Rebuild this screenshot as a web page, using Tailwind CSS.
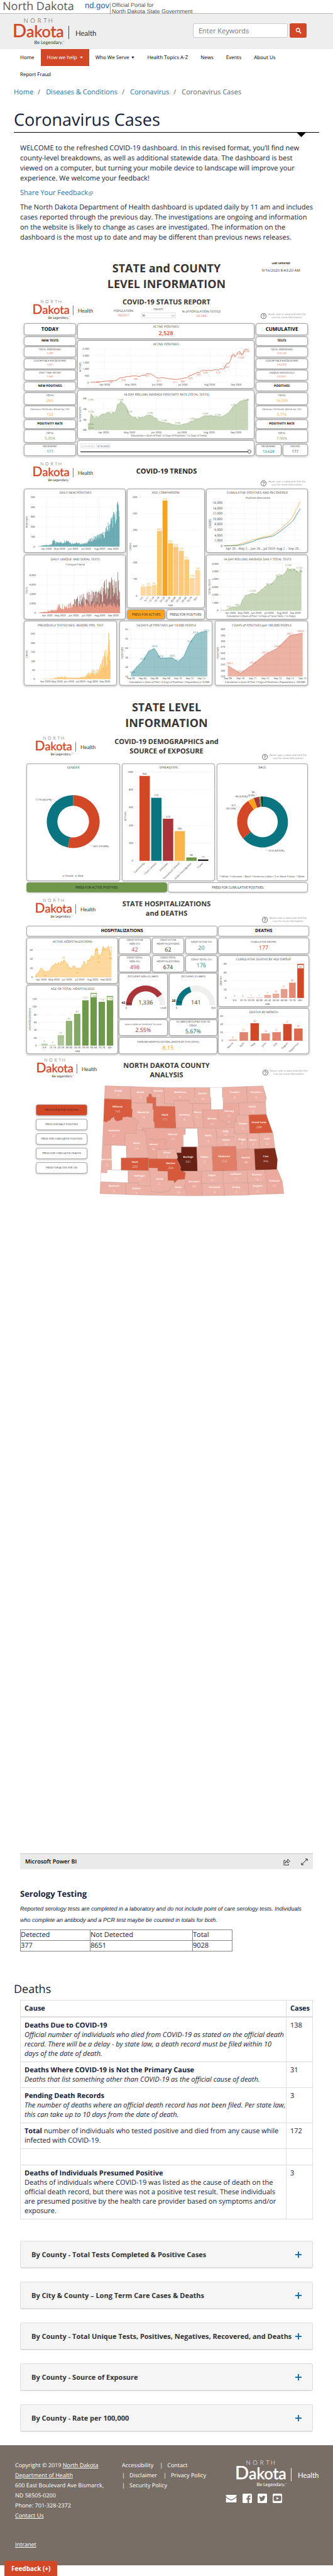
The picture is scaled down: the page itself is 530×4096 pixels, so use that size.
<!DOCTYPE html>
<html lang="en">
<head>
<meta charset="utf-8">
<meta name="viewport" content="width=device-width, initial-scale=1">
<title>Coronavirus Cases | Department of Health</title>
<script src="https://cdn.jsdelivr.net/npm/@tailwindcss/browser@4"></script>
</head>
<body class="bg-white font-['Open_Sans',sans-serif] text-[11px] leading-4 text-[#16213a] [text-rendering:geometricPrecision]">

<svg class="hidden" aria-hidden="true">
  <symbol id="logo" viewBox="0 0 194 65">
    <text x="23 39 56 70 81" y="11" font-family="Lato" font-weight="300" font-size="14" fill="currentColor">NORTH</text>
    <text x="-3" y="44" font-family="Lato" font-size="37" fill="var(--mark)" stroke="var(--mark)" stroke-width="0.8"><tspan font-size="43">D</tspan>akota</text>
    <path d="M129.500 18v31" stroke="currentColor" stroke-width="1.400"/>
    <text x="145" y="41" font-family="Lato" font-size="17" fill="currentColor">Health</text>
    <text x="48" y="61" font-family="Lato" font-size="11" fill="currentColor">Be Legendary.<tspan font-size="5" dy="-4">™</tspan></text>
  </symbol>
  <symbol id="help" viewBox="0 0 20 20">
    <circle cx="10" cy="10" r="9" fill="none" stroke="#222" stroke-width="1.500"/>
    <path d="M7 8a3 3 0 1 1 4.500 2.600c-1 .7-1.500 1-1.500 2.200" fill="none" stroke="#222" stroke-width="1.600"/>
    <circle cx="10" cy="15" r="1" fill="#222"/>
  </symbol>
</svg>

<div class="flex h-[21px] items-start pl-1">
  <a href="#" class="w-[131px] text-[18px] leading-5 text-[#58595b]">North Dakota</a>
  <a href="#" class="font-['Liberation_Sans',sans-serif] text-[13px] leading-[18px] text-[#2a63ad]">nd.gov</a>
  <span class="mt-1 ml-px border-l border-gray-400 pl-[2px] font-['Liberation_Sans',sans-serif] text-[9px] leading-[10px] text-[#555]"><span class="block -mt-px">Official Portal for</span><span class="block">North Dakota State Government</span></span>
</div>

<header class="flex h-[57px] items-center justify-between border-t border-[#bbb] bg-[#eee] pr-[42px] pl-[22px]">
  <svg class="mt-px h-11 w-[131px] text-[#333] [--mark:#d24726]" role="img" aria-label="North Dakota Health"><use href="#logo"/></svg>
  <form class="mt-[-3px] flex gap-[3px]">
    <input type="search" aria-label="Search" placeholder="Enter Keywords" class="h-[23px] w-[151px] rounded-[3px] border border-[#ccc] bg-white px-2 text-[11px] placeholder:text-[#777]">
    <button type="button" aria-label="Search" class="flex h-[23px] w-[27px] items-center justify-center rounded-[3px] bg-[#d24726]"><svg viewBox="0 0 12 12" class="size-[10px]"><circle cx="5" cy="4.500" r="3.300" fill="none" stroke="#fff" stroke-width="1.800"/><path d="M7.500 7l3.500 4" stroke="#fff" stroke-width="2"/></svg></button>
  </form>
</header>

<nav class="flex flex-wrap px-[22px] text-[8px] leading-[27px] text-black">
  <a href="#" class="px-[10px]">Home</a>
  <a href="#" class="flex items-center gap-1 bg-[#d24726] px-[10px] text-white">How we help <svg viewBox="0 0 6 4" class="h-[3px] w-[5px]"><path d="M0 0h6L3 4z" fill="currentColor"/></svg></a>
  <a href="#" class="flex items-center gap-1 px-[10px]">Who We Serve <svg viewBox="0 0 6 4" class="h-[3px] w-[5px]"><path d="M0 0h6L3 4z" fill="currentColor"/></svg></a>
  <a href="#" class="px-[10px]">Health Topics A-Z</a>
  <a href="#" class="px-[10px]">News</a>
  <a href="#" class="px-[10px]">Events</a>
  <a href="#" class="px-[10px]">About Us</a>
  <a href="#" class="px-[10px]">Report Fraud</a>
</nav>

<main>
  <div class="px-[22px]">
    <nav aria-label="Breadcrumb" class="mt-[7px] flex gap-[7px] text-[#666]">
      <a href="#" class="text-[#1b75aa]">Home</a><span>/</span>
      <a href="#" class="ml-[2px] text-[#1b75aa]">Diseases &amp; Conditions</a><span>/</span>
      <a href="#" class="ml-[2px] text-[#1b75aa]">Coronavirus</a><span>/</span>
      <span class="ml-[2px]">Coronavirus Cases</span>
    </nav>
    <h1 class="mt-[17px] h-[38px] text-[27px] leading-9">Coronavirus Cases</h1>
    <div class="border-t border-black"><svg viewBox="0 0 16 8" class="mr-[21px] ml-auto h-[7px] w-[15px]"><path d="M0 0h16L8 8z"/></svg></div>
  </div>

  <div class="pr-[30px] pl-8">
    <p class="mt-[10px]">WELCOME to the refreshed COVID-19 dashboard. In this revised format, you’ll find new county-level breakdowns, as well as additional statewide data. The dashboard is best viewed on a computer, but turning your mobile device to landscape will improve your experience. We welcome your feedback!</p>
    <p class="mt-[7px]"><a href="#" class="text-[#1b75aa]">Share Your Feedback<svg viewBox="0 0 10 10" class="ml-px inline size-[7px] text-gray-500"><path d="M4 3H1v6h5V6M4 1h5v5L7 4.500 4.500 7 3.200 5.600 5.700 3z" fill="none" stroke="currentColor"/></svg></a></p>
    <p class="mt-[7px]">The North Dakota Department of Health dashboard is updated daily by 11 am and includes cases reported through the previous day. The investigations are ongoing and information on the website is likely to change as cases are investigated. The information on the dashboard is the most up to date and may be different than previous news releases.</p>
  </div>

  <section aria-label="Dashboard" class="mt-[27px] px-[39px] text-[4px] leading-[6px] text-[#333]">
    <!-- Status report -->
    <div class="grid grid-cols-[1fr_auto_1fr]">
      <span></span>
      <h2 class="mt-[2px] text-center text-[18px] leading-[25px] font-bold text-[#3a3532]">STATE and COUNTY<br>LEVEL INFORMATION</h2>
      <div class="mt-1 justify-self-center pl-[44px] text-center"><b class="block text-black">LAST UPDATED</b><span class="mt-[3px] block text-[6px] leading-2">9/16/2020 8:43:20 AM</span></div>
    </div>
    <div class="mt-[9px] grid h-[41px] grid-cols-[1fr_auto_1fr]">
      <svg class="mt-[3px] ml-[14px] h-8 w-[95px] text-[#333] [--mark:#d24726]" role="img" aria-label="North Dakota Health"><use href="#logo"/></svg>
      <div class="text-center">
        <h3 class="text-[11px] leading-[14px] font-bold text-[#3a3532]">COVID-19 STATUS REPORT</h3>
        <div class="mt-[2px] grid grid-cols-[48px_auto_74px] justify-center gap-1 text-[5px] leading-[7px]">
          <div class="mt-[2px]">POPULATION<span class="block text-[#e0694e]">760,077</span></div>
          <label class="relative block w-[55px] text-[4px] leading-[5px]">COUNTY<select class="mt-[2px] block h-[9px] w-full appearance-none border border-gray-200 bg-white pl-px text-[4px]"><option>All</option></select><svg viewBox="0 0 8 5" class="pointer-events-none absolute right-[2px] bottom-[3px] h-[3px] w-[5px]"><path d="M0 0l4 4 4-4" fill="none" stroke="#666"/></svg></label>
          <div class="mt-[3px]">% of POPULATION TESTED<span class="block text-[#e0694e]">28.24%</span></div>
        </div>
      </div>
      <div class="mt-[24px] mr-[5px] flex items-start gap-[3px] justify-self-end text-center leading-[5px] text-[#888]"><svg class="h-[9px] w-[9px]"><use href="#help"/></svg><p>Hover over a value and click the<br>icon for more information</p></div>
    </div>
    <div id="status" class="grid grid-cols-[81fr_280fr_81fr] gap-1 pr-[2px] text-center">
      <div data-stack="today" class="flex flex-col justify-between"></div>
      <div class="flex flex-col justify-between gap-1">
        <div class="h-[23px] rounded-[3px] bg-white pt-[2px] text-[5px] leading-[7px] shadow-[0_0_0_1px_#aaa,0_1px_3px_2px_rgba(0,0,0,0.2)]">ACTIVE POSITIVES<b class="block text-[9px] leading-3 text-[#e0694e]">2,528</b></div>
        <svg id="active" viewBox="0 0 280 75" class="block w-full rounded-[3px] bg-white shadow-[0_0_0_1px_#aaa,0_1px_3px_2px_rgba(0,0,0,0.2)]"></svg>
        <svg id="rate" viewBox="0 0 280 76" class="block w-full rounded-[3px] bg-white shadow-[0_0_0_1px_#aaa,0_1px_3px_2px_rgba(0,0,0,0.2)]"></svg>
        <div class="h-[23px] rounded-[3px] bg-white px-1 pt-1 shadow-[0_0_0_1px_#aaa,0_1px_3px_2px_rgba(0,0,0,0.2)]">
          <div class="flex gap-[2px]"><input aria-label="From" value="3/15/2020" class="h-2 w-[23px] border border-gray-200 text-center text-gray-400"><input aria-label="To" value="9/15/2020" class="h-2 w-[23px] border border-gray-200 text-center text-gray-700"></div>
          <input type="range" aria-label="Date" value="100" class="mt-[2px] block h-[6px] w-full appearance-none [background:linear-gradient(#000,#000)_center/100%_1px_no-repeat] [&::-webkit-slider-thumb]:size-[6px] [&::-webkit-slider-thumb]:appearance-none [&::-webkit-slider-thumb]:rounded-full [&::-webkit-slider-thumb]:border [&::-webkit-slider-thumb]:border-gray-600 [&::-webkit-slider-thumb]:bg-white">
        </div>
      </div>
      <div data-stack="cumulative" class="flex flex-col justify-between"></div>
    </div>

    <!-- Trends -->
    <div class="grid h-[54px] grid-cols-[1fr_auto_1fr]">
      <svg class="mt-[11px] ml-[14px] h-8 w-[95px] text-[#333] [--mark:#d24726]" role="img" aria-label="North Dakota Health"><use href="#logo"/></svg>
      <h3 class="mt-[19px] text-[11px] leading-[14px] font-bold text-[#222]">COVID-19 TRENDS</h3>
      <div class="mt-[40px] mr-[5px] flex items-start gap-[3px] justify-self-end text-center leading-[5px] text-[#888]"><svg class="h-[9px] w-[9px]"><use href="#help"/></svg><p>Hover over a value and click the<br>icon for more information</p></div>
    </div>
    <div class="grid grid-cols-[160fr_121fr_160fr] gap-1 pr-[2px]">
      <div class="flex flex-col gap-[5px]">
        <svg id="daily" viewBox="0 0 160 100" class="block w-full rounded-[3px] bg-white shadow-[0_0_0_1px_#aaa,0_1px_3px_2px_rgba(0,0,0,0.2)]"></svg>
        <svg id="serial" viewBox="0 0 160 101" class="block w-full rounded-[3px] bg-white shadow-[0_0_0_1px_#aaa,0_1px_3px_2px_rgba(0,0,0,0.2)]"></svg>
      </div>
      <div class="flex flex-col justify-between">
        <svg id="age" viewBox="0 0 121 188" class="block w-full rounded-[3px] bg-white shadow-[0_0_0_1px_#aaa,0_1px_3px_2px_rgba(0,0,0,0.2)]"></svg>
        <div class="grid grid-cols-2 gap-1 text-[5px] leading-[14px]">
          <button type="button" class="rounded-[3px] bg-[#faa21b] shadow-[0_0_0_1px_#aaa,0_1px_3px_2px_rgba(0,0,0,0.2)]">PRESS FOR ACTIVES</button>
          <button type="button" class="rounded-[3px] bg-white shadow-[0_0_0_1px_#aaa,0_1px_3px_2px_rgba(0,0,0,0.2)]">PRESS FOR POSITIVES</button>
        </div>
      </div>
      <div class="flex flex-col gap-[5px]">
        <svg id="cumrec" viewBox="0 0 160 100" class="block w-full rounded-[3px] bg-white shadow-[0_0_0_1px_#aaa,0_1px_3px_2px_rgba(0,0,0,0.2)]"></svg>
        <svg id="rolling" viewBox="0 0 160 101" class="block w-full rounded-[3px] bg-white shadow-[0_0_0_1px_#aaa,0_1px_3px_2px_rgba(0,0,0,0.2)]"></svg>
      </div>
    </div>
    <div class="mt-1 grid grid-cols-3 gap-[6px] pr-[2px]">
      <svg id="prev" viewBox="0 0 146 101" class="block w-full rounded-[3px] bg-white shadow-[0_0_0_1px_#aaa,0_1px_3px_2px_rgba(0,0,0,0.2)]"></svg>
      <svg id="d14" viewBox="0 0 146 101" class="block w-full rounded-[3px] bg-white shadow-[0_0_0_1px_#aaa,0_1px_3px_2px_rgba(0,0,0,0.2)]"></svg>
      <svg id="d7" viewBox="0 0 146 101" class="block w-full rounded-[3px] bg-white shadow-[0_0_0_1px_#aaa,0_1px_3px_2px_rgba(0,0,0,0.2)]"></svg>
    </div>

    <!-- State level -->
    <h2 class="mt-6 text-center text-[18px] leading-[25px] font-bold text-[#3a3532]">STATE LEVEL<br>INFORMATION</h2>
    <div class="grid h-[52px] grid-cols-[1fr_auto_1fr]">
      <svg class="mt-[8px] ml-[18px] h-8 w-[95px] text-[#333] [--mark:#d24726]" role="img" aria-label="North Dakota Health"><use href="#logo"/></svg>
      <h3 class="mt-[9px] text-center text-[11px] leading-[15px] font-bold text-[#3a3532]">COVID-19 DEMOGRAPHICS and<br>SOURCE of EXPOSURE</h3>
      <div class="mt-[36px] mr-[3px] flex items-start gap-[3px] justify-self-end text-center leading-[5px] text-[#888]"><svg class="h-[9px] w-[9px]"><use href="#help"/></svg><p>Hover over a value and click the<br>icon for more information</p></div>
    </div>
    <div class="grid grid-cols-[147fr_147fr_143fr] gap-[5px] pr-[2px] pl-1">
      <svg id="gender" viewBox="0 0 147 185" class="block w-full rounded-[3px] bg-white shadow-[0_0_0_1px_#aaa,0_1px_3px_1px_rgba(0,0,0,0.2)]"></svg>
      <svg id="spread" viewBox="0 0 147 185" class="block w-full rounded-[3px] bg-white shadow-[0_0_0_1px_#aaa,0_1px_3px_1px_rgba(0,0,0,0.2)]"></svg>
      <svg id="race" viewBox="0 0 143 185" class="block h-full w-full rounded-[3px] bg-white shadow-[0_0_0_1px_#aaa,0_1px_3px_1px_rgba(0,0,0,0.2)]"></svg>
    </div>
    <div class="mt-1 grid grid-cols-2 gap-[3px] pr-[2px] pl-1 text-[5px] leading-[14px]">
      <button type="button" class="rounded-[3px] bg-[#6f984a] text-[#222] shadow-[0_0_0_1px_#7a9a60,0_1px_3px_1px_rgba(0,0,0,0.2)]">PRESS FOR ACTIVE POSITIVES</button>
      <button type="button" class="rounded-[3px] bg-white shadow-[0_0_0_1px_#aaa,0_1px_3px_1px_rgba(0,0,0,0.2)]">PRESS FOR CUMULATIVE POSITIVES</button>
    </div>

    <!-- Hospitalizations -->
    <div class="grid h-[55px] grid-cols-[1fr_auto_1fr]">
      <svg class="mt-[11px] ml-[18px] h-8 w-[95px] text-[#333] [--mark:#d24726]" role="img" aria-label="North Dakota Health"><use href="#logo"/></svg>
      <h3 class="mt-[12px] text-center text-[11px] leading-[15px] font-bold text-[#3a3532]">STATE HOSPITALIZATIONS<br>and DEATHS</h3>
      <div class="mt-[40px] mr-[3px] flex items-start gap-[3px] justify-self-end text-center leading-[5px] text-[#888]"><svg class="h-[9px] w-[9px]"><use href="#help"/></svg><p>Hover over a value and click the<br>icon for more information</p></div>
    </div>
    <div class="grid grid-cols-[303fr_143fr] gap-[3px] pl-1 text-center text-[7px] leading-[15px] font-bold text-black">
      <h4 class="rounded-[3px] bg-white shadow-[0_0_0_1px_#aaa,0_1px_3px_1px_rgba(0,0,0,0.2)]">HOSPITALIZATIONS</h4>
      <h4 class="rounded-[3px] bg-white shadow-[0_0_0_1px_#aaa,0_1px_3px_1px_rgba(0,0,0,0.2)]">DEATHS</h4>
    </div>
    <div class="mt-1 grid grid-cols-[144fr_155fr_143fr] gap-[3px] pl-1 text-center">
      <div class="flex flex-col gap-1">
        <svg id="hosp" viewBox="0 0 144 71" class="block w-full rounded-[3px] bg-white shadow-[0_0_0_1px_#aaa,0_1px_3px_2px_rgba(0,0,0,0.2)]"></svg>
        <svg id="hospage" viewBox="0 0 144 108" class="block w-full rounded-[3px] bg-white shadow-[0_0_0_1px_#aaa,0_1px_3px_2px_rgba(0,0,0,0.2)]"></svg>
      </div>
      <div id="beds" class="flex flex-col justify-between">
        <div data-stack="small1" class="grid grid-cols-3 gap-1"></div>
        <div data-stack="small2" class="grid grid-cols-3 gap-1"></div>
        <div class="grid grid-cols-2 gap-1">
          <svg id="g1" viewBox="0 0 75 70" class="block w-full rounded-[3px] bg-white shadow-[0_0_0_1px_#aaa,0_1px_3px_2px_rgba(0,0,0,0.2)]"></svg>
          <svg id="g2" viewBox="0 0 75 70" class="block w-full rounded-[3px] bg-white shadow-[0_0_0_1px_#aaa,0_1px_3px_2px_rgba(0,0,0,0.2)]"></svg>
        </div>
        <div data-stack="due" class="grid grid-cols-2 gap-1"></div>
        <div data-stack="stay" class="grid"></div>
      </div>
      <div class="flex flex-col justify-between">
        <div data-stack="deaths" class="grid"></div>
        <svg id="deathage" viewBox="0 0 143 80" class="block w-full rounded-[3px] bg-white shadow-[0_0_0_1px_#aaa,0_1px_3px_2px_rgba(0,0,0,0.2)]"></svg>
        <svg id="month" viewBox="0 0 143 71" class="block w-full rounded-[3px] bg-white shadow-[0_0_0_1px_#aaa,0_1px_3px_2px_rgba(0,0,0,0.2)]"></svg>
      </div>
    </div>

    <!-- County analysis -->
    <div class="grid h-[51px] grid-cols-[1fr_auto_1fr]">
      <svg class="mt-[8px] ml-[20px] h-8 w-[95px] text-[#333] [--mark:#d24726]" role="img" aria-label="North Dakota Health"><use href="#logo"/></svg>
      <h3 class="mt-[12px] text-center text-[11px] leading-[15px] font-bold text-[#3a3532]">NORTH DAKOTA COUNTY<br>ANALYSIS</h3>
      <div class="mt-[26px] mr-[2px] flex items-start gap-[3px] justify-self-end text-center leading-[5px] text-[#888]"><svg class="h-[9px] w-[9px]"><use href="#help"/></svg><p>Hover over a value and click the<br>icon for more information</p></div>
    </div>
    <div class="grid grid-cols-[80fr_293fr] gap-[21px] pr-[39px] pl-[19px]">
      <div class="mt-[31px] flex flex-col gap-[7px] text-[4px] leading-4">
        <button type="button" class="rounded-[3px] bg-[#d24726] text-[#222] shadow-[0_0_0_1px_#b99,0_1px_3px_1px_rgba(0,0,0,0.25)]">PRESS FOR ACTIVE POSITIVES</button>
        <button type="button" class="rounded-[3px] bg-white shadow-[0_0_0_1px_#aaa,0_1px_3px_1px_rgba(0,0,0,0.25)]">PRESS FOR DAILY POSITIVES</button>
        <button type="button" class="rounded-[3px] bg-white shadow-[0_0_0_1px_#aaa,0_1px_3px_1px_rgba(0,0,0,0.25)]">PRESS FOR CUMULATIVE POSITIVES</button>
        <button type="button" class="rounded-[3px] bg-white shadow-[0_0_0_1px_#aaa,0_1px_3px_1px_rgba(0,0,0,0.25)]">PRESS FOR CUMULATIVE DEATHS</button>
        <button type="button" class="rounded-[3px] bg-white shadow-[0_0_0_1px_#aaa,0_1px_3px_1px_rgba(0,0,0,0.25)]">PRESS FOR ACTIVE PER 10K</button>
      </div>
      <svg id="map" viewBox="0 0 293 176" class="block w-full"></svg>
    </div>
  </section>

  <div class="px-8">
    <div class="mt-[1045px] flex h-[25px] items-center justify-between border-t border-[#c8c8c8] bg-[#eaeaea] px-2 text-[9px] font-semibold text-black">
      <span>Microsoft Power BI</span>
      <span class="flex items-center gap-[17px]">
        <button type="button" aria-label="Share"><svg viewBox="0 0 12 12" class="size-[11px]"><path d="M3.500 3.500H1v8h8V9.500M3 8.500c.3-3 2-4.500 4.500-4.500V1.500L11.300 5 7.500 8V6C5.500 6 4 7 3 8.500z" fill="none" stroke="#111" stroke-width=".9"/></svg></button>
        <button type="button" aria-label="Full screen"><svg viewBox="0 0 12 12" class="size-[11px]"><path d="M1 11 11 1M7.500 1H11v3.500M1 7.500V11h3.500" fill="none" stroke="#111"/></svg></button>
      </span>
    </div>

    <h2 class="mt-[29px] text-[13px] leading-5 font-bold">Serology Testing</h2>
    <p class="mt-[5px] font-['Liberation_Sans',sans-serif] text-[9px] leading-[18px] italic">Reported serology tests are completed in a laboratory and do not include point of care serology tests. Individuals who complete an antibody and a PCR test maybe be counted in totals for both.</p>
    <table class="mt-[6px] w-[338px] border-collapse border border-[#222] text-left">
      <tr><td class="w-[111px] border border-[#888]">Detected</td><td class="w-[163px] border border-[#888]">Not Detected</td><td class="border border-[#888]">Total</td></tr>
      <tr><td class="border border-[#888]">377</td><td class="border border-[#888]">8651</td><td class="border border-[#888]">9028</td></tr>
    </table>
  </div>

  <h2 class="mt-[48px] px-[22px] text-[18px] leading-6">Deaths</h2>
  <div class="px-8">
    <table class="mt-[5px] w-full table-fixed border-collapse leading-[15px] [&_td]:border [&_td]:border-[#ddd] [&_td]:py-[5px] [&_td]:pl-[6px] [&_td]:align-top [&_th]:border [&_th]:border-[#ddd] [&_th]:py-[5px] [&_th]:pl-[6px] [&_th]:text-left">
      <thead><tr class="border-b-2 border-[#ddd]"><th>Cause</th><th class="w-[42px]">Cases</th></tr></thead>
      <tbody>
      <tr><td><b>Deaths Due to COVID-19</b><br><i>Official number of individuals who died from COVID-19 as stated on the official death record. There will be a delay - by state law, a death record must be filed within 10 days of the date of death.</i></td><td>138</td></tr>
      <tr><td><b>Deaths Where COVID-19 is Not the Primary Cause</b><br><i>Deaths that list something other than COVID-19 as the official cause of death.</i></td><td>31</td></tr>
      <tr><td><b>Pending Death Records</b><br><i>The number of deaths where an official death record has not been filed. Per state law, this can take up to 10 days from the date of death.</i></td><td>3</td></tr>
      <tr><td><b>Total</b> number of individuals who tested positive and died from any cause while infected with COVID-19.</td><td>172</td></tr>
      <tr><td>&nbsp;</td><td></td></tr>
      <tr><td><b>Deaths of Individuals Presumed Positive</b><br>Deaths of individuals where COVID-19 was listed as the cause of death on the official death record, but there was not a positive test result. These individuals are presumed positive by the health care provider based on symptoms and/or exposure.</td><td>3</td></tr>
      </tbody>
    </table>

    <div id="panels" class="mt-[34px] flex flex-col gap-[21px]"></div>
  </div>
</main>

<footer class="mt-[21px] flex h-[191px] bg-[#786e66] pt-6 pl-6 text-[9px] text-white">
  <div class="w-[170px]">
    <p>Copyright © 2019 <a href="#" class="underline">North Dakota<br>Department of Health</a></p>
    <p>600 East Boulevard Ave Bismarck,<br>ND 58505-0200</p>
    <p>Phone: 701-328-2372</p>
    <p><a href="#" class="underline">Contact Us</a></p>
    <p class="mt-[30px]"><a href="#" class="underline">Intranet</a></p>
  </div>
  <div class="w-[165px]">
    <div class="flex gap-[7px]"><a href="#" class="mr-[3px]">Accessibility</a><span>|</span><a href="#">Contact</a></div>
    <div class="flex gap-[7px]"><span>|</span><a href="#" class="mr-[3px]">Disclaimer</a><span>|</span><a href="#">Privacy Policy</a></div>
    <div class="flex gap-[7px]"><span>|</span><a href="#">Security Policy</a></div>
  </div>
  <div>
    <svg class="ml-[17px] h-11 w-[131px] text-white [--mark:#fff]" role="img" aria-label="North Dakota Health"><use href="#logo"/></svg>
    <div class="mt-[9px] flex items-center gap-[9px]">
      <a href="#" aria-label="Email"><svg viewBox="0 0 18 13" class="h-3 w-[18px]"><path d="M0 0h18v2.500Q12 8 9 8T0 2.500zM0 4Q6 9.500 9 9.500T18 4v9H0z" fill="#fff"/></svg></a>
      <a href="#" aria-label="Facebook"><svg viewBox="0 0 16 16" class="size-[15px]"><rect width="16" height="16" rx="2" fill="#fff"/><path d="M8.500 16v-6H6.500V7.600h2V6c0-2.200 1.200-3.200 3-3.200h2V5h-1.300c-.9 0-1.200.4-1.200 1.200v1.400h2.400L13.100 10H11v6z" fill="#786e66"/></svg></a>
      <a href="#" aria-label="Twitter"><svg viewBox="0 0 16 16" class="size-[15px]"><rect width="16" height="16" rx="2" fill="#fff"/><path d="M13.500 4.500l-1.300 1.300c.1 4-2.700 6.900-6.200 6.900-1.300 0-2.400-.3-3.500-1 1.200.1 2.200-.2 3.100-.9-1-.1-1.700-.7-2-1.600h1c-1.100-.3-1.800-1.200-1.800-2.300l1 .3C2.700 6.400 2.500 5 3.100 4c1.300 1.500 2.800 2.300 4.700 2.400-.4-2.200 2-3.800 3.800-2.200l1.500-.5-1 1.200z" fill="#786e66"/></svg></a>
      <a href="#" aria-label="YouTube"><svg viewBox="0 0 16 16" class="size-[15px]"><rect width="16" height="16" rx="2" fill="#fff"/><rect x="1.500" y="3.500" width="13" height="9" rx="2" fill="#786e66"/><path d="M6.500 5.800v4.400l4-2.200z" fill="#fff"/></svg></a>
    </div>
  </div>
</footer>
<div class="h-[18px]"></div>
<button type="button" class="fixed bottom-0 left-[7px] h-6 rounded-t-[4px] bg-[#d24726] px-[11px] text-[10px] font-bold text-white">Feedback (+)</button>

<script>
// Stat cards ---------------------------------------------------------------
const CARD = 'rounded-[3px] bg-white shadow-[0_0_0_1px_#aaa,0_1px_3px_2px_rgba(0,0,0,0.2)] flex flex-col items-center justify-center ';
const H = {13:'h-[13px]',15:'h-[15px]',17:'h-[17px]',18:'h-[18px]',19:'h-[19px]',24:'h-[24px]',25:'h-[25px]'};
const S = {4:'text-[4px] leading-[6px]',6:'text-[6px] leading-[8px]',9:'text-[9px] leading-[10px]'};
const C = {r:'text-[#e0694e]',R:'text-[#d24726]',y:'text-[#faa21b]',g:'text-[#6d9949]',t:'text-[#0a7480]',k:'text-[#333]',m:'text-[#b94c58]',M:'text-[#a93439]',T:'text-[#2f8a94]'};
const stat = (h, label, val, c, s) => `<div class="${CARD}${H[h]}"><span>${label}</span><span class="${S[s]} ${C[c]}">${val}</span></div>`;
const head = (h, t) => `<div class="${CARD}${H[h]} font-bold text-black ${h === 17 ? 'text-[8px]' : 'text-[5px]'}">${t}</div>`;
const neg = 'PREVIOUSLY TESTED NEG. BEFORE POS. TEST';
const stacks = {
  today: head(17,'TODAY')+head(13,'NEW TESTS')+stat(15,'TOTAL PROCESSED','5,209','r',4)+stat(15,'SUSCEPTIBLE ENCOUNTERS','5,027','r',4)+stat(15,'FIRST TIME TESTED','1,660','r',4)+head(13,'NEW POSITIVES')+stat(18,'TOTAL','269','y',6)+stat(18,`<span class="text-[3px]">${neg}</span>`,'102','y',6)+head(13,'POSITIVITY RATE')+stat(19,'TOTAL','5.35%','g',6)+stat(17,'RECOVERED','177','t',6),
  cumulative: head(17,'CUMULATIVE')+head(13,'TESTS')+stat(15,'TOTAL PROCESSED','553,163','r',4)+stat(15,'SUSCEPTIBLE ENCOUNTERS','534,223','r',4)+stat(15,'UNIQUE INDIVIDUALS','222,057','r',4)+head(13,'POSITIVES')+stat(18,'TOTAL','16,333','y',6)+stat(18,`<span class="text-[3px]">${neg}</span>`,'5,716','y',6)+head(13,'POSITIVITY RATE')+stat(19,'TOTAL','7.36%','g',6)+`<div class="grid grid-cols-2 gap-1">${stat(17,'RECOVERED','13,628','t',6)}${stat(17,'DEATHS','177','k',6)}</div>`,
  small1: stat(24,'COVID ACTIVE<br>NON-ICU','42','m',9)+stat(24,'COVID ACTIVE<br>HOSPITALIZATIONS','62','k',9)+stat(24,'COVID ACTIVE ICU','20','T',9),
  small2: stat(25,'COVID TOTAL<br>NON-ICU','498','m',9)+stat(25,'COVID TOTAL<br>HOSPITALIZATIONS','674','k',9)+stat(25,'COVID TOTAL ICU','176','T',9),
  due: stat(24,'<span class="text-[3px]">NON-ICU BEDS OCCUPIED DUE TO COVID</span>','2.55%','M',9)+stat(24,'ICU BEDS OCCUPIED DUE TO<br>COVID','5.67%','t',9),
  stay: stat(25,'AVERAGE HOSPITALIZATION LENGTH OF STAY (DAYS)','8.15','y',9),
  deaths: stat(24,'CUMULATIVE DEATHS','177','R',9)
};
document.querySelectorAll('[data-stack]').forEach(e => e.innerHTML = stacks[e.dataset.stack]);

document.getElementById('panels').innerHTML = ['By County - Total Tests Completed &amp; Positive Cases','By City &amp; County – Long Term Care Cases &amp; Deaths','By County - Total Unique Tests, Positives, Negatives, Recovered, and Deaths','By County - Source of Exposure','By County - Rate per 100,000'].map(t =>
 `<button type="button" class="flex h-[44px] items-center justify-between rounded-[3px] border border-b-2 border-[#ddd] bg-[#f5f5f5] px-[17px] text-left font-bold whitespace-nowrap text-[#333]"><span>${t}</span><svg viewBox="0 0 10 10" class="size-[10px] shrink-0"><path d="M5 0v10M0 5h10" stroke="#1b75aa" stroke-width="2"/></svg></button>`).join('');

// Charts -------------------------------------------------------------------
// Chart data is laid out on a fine grid: 1 unit = 0.338 x 0.225 drawing units.
function board(id, ox, oy) {
  const X = x => ((x - ox) * 0.338).toFixed(2), Y = y => ((y - oy) * 0.225).toFixed(2);
  let out = '';
  const b = {
    X, Y,
    raw(s) { out += s; return b; },
    text(x, y, s, c = '#333', size = 4, o = {}) {
      const rot = o.rot ? ` transform="rotate(${o.rot} ${X(x)} ${Y(y)})"` : '';
      out += `<text x="${X(x)}" y="${(+Y(y) + size * .36).toFixed(2)}" font-size="${size}" fill="${c}" text-anchor="${o.a || 'middle'}" font-weight="${o.w || 400}"${rot}>${s}</text>`; return b;
    },
    line(pts, c, w = .7) { out += `<polyline points="${pts.map(p => X(p[0]) + ',' + Y(p[1])).join(' ')}" fill="none" stroke="${c}" stroke-width="${w}"/>`; return b; },
    poly(pts, c, op = 1, st = 'none') { out += `<polygon points="${pts.map(p => X(p[0]) + ',' + Y(p[1])).join(' ')}" fill="${c}" fill-opacity="${op}" stroke="${st}" stroke-width=".3"/>`; return b; },
    rect(x, y, x2, y2, c, op = 1) { out += `<rect x="${X(x)}" y="${Y(y)}" width="${((x2 - x) * .338).toFixed(2)}" height="${Math.max(0, (y2 - y) * .225).toFixed(2)}" fill="${c}" fill-opacity="${op}"/>`; return b; },
    yaxis(x0, x1, ticks, y0, y1, size = 4) { ticks.forEach((t, i) => { const y = y0 + (y1 - y0) * i / (ticks.length - 1); out += `<path d="M${X(x0)} ${Y(y)}H${X(x1)}" stroke="#ccc" stroke-width=".4" stroke-dasharray=".6 .9"/>`; b.text(x0 - 5, y, t, '#333', size, {a: 'end'}); }); return b; },
    xaxis(xs, labels, y, ytop, ybot, size = 4) { xs.forEach((x, i) => { if (ytop) out += `<path d="M${X(x)} ${Y(ytop)}V${Y(ybot)}" stroke="#ccc" stroke-width=".4" stroke-dasharray=".6 .9"/>`; b.text(x, y, labels[i], '#333', size); }); return b; },
    labels(list, c, size = 4) { list.forEach(l => b.text(l[0], l[1], l[2], c, size)); return b; },
    area(pts, base, c, op) { b.poly([[pts[0][0], base], ...pts, [pts[pts.length - 1][0], base]], c, op); return b.line(pts, c, .5); },
    done() { document.getElementById(id).innerHTML = out; }
  };
  return b;
}
const MON = ['Apr 2020','May 2020','Jun 2020','Jul 2020','Aug 2020','Sep 2020'];
const pairs = s => s.trim().split(/\s+/).map(p => p.split(',').map(Number));
const interp = (pts, x) => { for (let i = 1; i < pts.length; i++) if (x <= pts[i][0]) { const a = pts[i-1], c = pts[i]; return a[1] + (c[1]-a[1]) * (x-a[0]) / (c[0]-a[0]); } return pts[pts.length-1][1]; };
const noise = i => { const s = Math.sin(i * 12.9898) * 43758.5453; return s - Math.floor(s); };

let b = board('active', 368, 615);
b.text(783, 640, 'ACTIVE POSITIVES', '#333', 5).yaxis(425, 1175, ['0','500','1,000','1,500','2,000','2,500'], 909, 672)
 .xaxis([494,616,741,862,988,1113], MON, 924, 672, 909).text(379, 800, 'ACTIVES', '#333', 4, {rot: -90})
 .line(pairs('428,10 460,30 500,100 545,140 555,200 562,330 572,360 585,370 596,440 612,440 620,480 645,490 655,440 672,530 685,550 693,650 710,640 722,540 737,370 752,310 758,370 780,330 795,280 812,260 825,215 845,250 860,290 870,350 880,330 892,480 910,600 922,680 932,760 940,740 950,880 965,920 975,880 982,930 988,880 1003,900 1012,960 1020,930 1027,960 1030,900 1036,1020 1044,1030 1050,980 1057,1040 1065,1340 1070,1430 1078,1410 1085,1600 1090,1800 1095,2050 1101,2130 1108,1940 1115,2050 1120,2220 1130,2320 1138,2040 1142,2080 1147,2150 1152,2400 1157,2500 1165,2430 1171,2528').map(p => [p[0], 909 - p[1] * .0948]), '#d24726', .7)
 .labels([[461,905,'30'],[522,905,'132'],[583,891,'376'],[640,882,'490'],[696,864,'671'],[749,897,'321'],[826,906,'211'],[862,900,'300'],[898,879,'520'],[935,855,'769'],[968,840,'923'],[1028,840,'918'],[1065,801,'1,322'],[1100,722,'2,141'],[1130,706,'2,318'],[1137,734,'2,032'],[1161,687,'2,528']], '#e0694e').done();

b = board('rate', 368, 186);
b.text(784, 212, '14 DAY ROLLING AVERAGE POSITIVITY RATE (TOTAL TESTS)', '#333', 5).yaxis(414, 1173, ['0%','2%','4%','6%'], 465, 243)
 .xaxis([488,611,737,859,986,1112], MON, 480, 243, 465).text(379, 354, '% POSITIVITY', '#333', 4, {rot: -90})
 .area(pairs('416,415 422,438 430,348 443,383 460,379 480,353 495,353 505,339 525,352 540,343 549,320 554,284 563,280 571,258 580,274 592,290 602,320 611,356 628,374 640,377 649,389 660,379 670,372 678,375 690,362 706,358 718,364 728,378 738,381 746,402 765,409 780,413 800,417 815,427 840,430 855,428 865,422 880,420 900,403 912,399 925,384 935,386 950,374 965,364 985,364 995,360 1005,367 1045,370 1060,359 1075,345 1090,318 1100,296 1113,290 1130,263 1145,256 1160,256 1169,250'), 465, '#8fac72', .5)
 .labels([[429,252,'5.9%'],[430,333,'3.2%'],[448,370,'2.2%'],[429,423,'0.8%'],[429,450,'0.0%'],[524,340,'3.1%'],[570,252,'5.6%'],[611,336,'3.1%'],[647,375,'2.1%'],[708,345,'2.9%'],[774,399,'1.4%'],[839,417,'0.9%'],[905,384,'1.8%'],[969,348,'2.8%'],[1027,357,'2.5%'],[1101,285,'4.5%'],[1161,251,'5.8%']], '#7fa05f')
 .text(796, 505, 'Calculation = (Sum of Past 14 Days of Positives / 14 Days of Tests)').done();

b = board('daily', 116, 226);
b.text(355, 250, 'DAILY NEW POSITIVES', '#333', 5).yaxis(170, 562, ['0','100','200','300','400','500'], 630, 282)
 .xaxis([219,281,344,406,469,532], MON, 645, 282, 630).text(127, 457, 'POSITIVES', '#333', 4, {rot: -90});
let env = pairs('172,0 190,6 210,18 240,22 253,80 262,40 272,65 290,45 310,75 322,75 335,40 355,45 375,35 400,38 420,75 440,100 465,130 490,150 505,230 525,330 540,380 545,330 553,466 556,428 562,265');
for (let i = 0; i < 186; i++) { const x = 172 + i * 2.1; const v = interp(env, x) * (i > 180 ? 1 : .55 + .5 * noise(i)); b.rect(x, 630 - v * .696, x + 1.9, 630, '#0a7480', .78); }
b.done();

b = board('serial', 116, 692);
b.text(354, 718, 'DAILY UNIQUE AND SERIAL TESTS', '#333', 5).labels([[337,757,'Unique'],[384,757,'Serial']], '#333')
 .text(312, 755, '●', '#d24726', 3).text(364, 755, '●', '#6b1f16', 3)
 .yaxis(174, 562, ['0','2,000','4,000','6,000','8,000'], 1100, 834).xaxis([223,284,347,408,470,533], MON, 1116, 780, 1100).text(127, 940, 'TESTS', '#333', 4, {rot: -90});
env = pairs('180,0 195,250 235,700 262,900 268,2000 300,2100 325,2600 345,2900 360,3600 385,4200 420,4600 440,5200 470,5200 495,7500 525,8300 545,6500 553,9600 562,6000');
for (let i = 0; i < 184; i++) { const x = 178 + i * 2.1, v = interp(env, x) * (.35 + .65 * noise(i + 7)), u = Math.min(v, 1100 + 1200 * noise(i * 3)); b.rect(x, 1100 - v * .0333, x + 1.9, 1100 - u * .0333, '#6b1f16', .8); b.rect(x, 1100 - u * .0333, x + 1.9, 1100, '#d24726', .72); }
b.done();

b = board('age', 603, 226);
b.text(782, 250, 'AGE COMPARISON', '#333', 5).yaxis(653, 952, ['0','100','200','300','400','500','600'], 976, 282).text(615, 630, 'CASES', '#333', 4, {rot: -90}).text(805, 1044, 'AGE');
[54,60,65,394,579,320,298,273,221,108,156].forEach((v, i) => { const x = 665 + i * 25.6, y = 976 - v * 1.157; b.rect(x, y, x + 23, 976, '#faa21b', v === 579 ? 1 : v > 350 ? .62 : v > 300 ? .72 : v > 200 ? .58 : .43); b.text(x + 11, y - 13, v, '#faa21b'); b.text(x + 9, 986, ['0-5','6-11','12-14','15-19','20-29','30-39','40-49','50-59','60-69','70-79','80+'][i], '#333', 4, {a: 'end', rot: -48}); });
b.done();

b = board('cumrec', 971, 226);
b.text(1208, 250, 'CUMULATIVE POSITIVES AND RECOVERED', '#333', 5).text(1180, 288, 'Positives').text(1239, 288, 'Recovered').text(1154, 287, '●', '#faa21b', 3).text(1208, 287, '●', '#0a7480', 3)
 .yaxis(1050, 1415, ['0','2,000','4,000','6,000','8,000','10,000','12,000','14,000','16,000'], 625, 320, 5).xaxis([1089,1147,1206,1265,1324,1384], ['Apr 20...','May 2...','Jun 20...','Jul 2020','Aug 2...','Sep 20...'], 645, 320, 625, 5)
 .text(985, 468, 'CASES', '#333', 5, {rot: -90})
 .line(pairs('1052,624 1090,622 1120,616 1140,605 1168,595 1187,581 1206,575 1235,564 1265,555 1280,547 1300,526 1324,498 1345,468 1357,455 1370,430 1378,405 1384,395 1392,363 1398,353 1405,325 1411,312'), '#faa21b').line(pairs('1052,625 1110,623 1130,619 1160,607 1187,595 1206,581 1235,570 1275,559 1290,550 1310,530 1340,495 1365,464 1378,445 1390,412 1400,388 1411,363'), '#0a7480').done();

b = board('rolling', 971, 692);
b.text(1209, 718, '14 DAY ROLLING AVERAGE DAILY TOTAL TESTS', '#333', 5).yaxis(1031, 1420, ['0','1,000','2,000','3,000','4,000','5,000','6,000'], 1082, 750)
 .xaxis([1083,1143,1204,1264,1326,1387], MON, 1098, 750, 1082).text(983, 915, 'TOTAL TESTS', '#333', 4, {rot: -90})
 .area(pairs('1036,1081 1058,1079 1068,1075 1078,1064 1095,1055 1110,1057 1117,1050 1124,1051 1131,1038 1139,1006 1146,992 1152,974 1165,971 1176,964 1188,958 1195,964 1206,962 1213,950 1218,951 1226,934 1238,925 1245,910 1252,909 1258,893 1264,905 1274,895 1283,880 1292,868 1298,850 1302,836 1311,842 1318,838 1328,835 1336,818 1341,813 1352,780 1357,795 1365,790 1374,803 1382,788 1390,799 1400,808 1406,822 1413,787 1416,792'), 1082, '#8fac72', .5)
 .labels([[1038,1068,'1'],[1076,1053,'251'],[1114,1041,'495'],[1186,944,'2,228'],[1264,893,'3,154'],[1310,832,'4,298'],[1354,763,'5,508'],[1371,794,'4,990'],[1406,807,'4,785'],[1407,777,'5,254']], '#7fa05f').text(1226, 1122, 'Calculation = (Sum of Past 14 Days of Total Tests / 14 Days)').done();

b = board('prev', 116, 287);
b.text(333, 313, 'PREVIOUSLY TESTED NEG. BEFORE POS. TEST', '#333', 5).yaxis(170, 520, ['0','50','100','150','200','250'], 695, 376)
 .xaxis([214,269,326,381,436,494], MON, 711, 345, 695).text(127, 518, 'CASES', '#333', 4, {rot: -90});
env = pairs('172,0 240,3 270,12 300,18 330,12 380,12 400,20 425,50 465,60 480,120 495,170 508,180 512,276 515,215 519,100');
for (let i = 0; i < 158; i++) { const x = 205 + i * 2; b.rect(x, 695 - interp(env, x) * (x > 510 ? 1 : .4 + .6 * noise(i + 3)) * 1.276, x + 1.8, 695, '#fba92c', .85); }
b.done();

b = board('d14', 565, 287);
b.text(783, 313, '14 DAYS of POSITIVES per 10,000 PEOPLE', '#333', 5).yaxis(608, 982, ['44','46','48','50','52','54'], 676, 345)
 .xaxis([617,672,727,783,838,893,948], ['Sep 02','Sep 04','Sep 06','Sep 08','Sep 10','Sep 12','Sep 14'], 690, 345, 676).text(577, 510, 'POSITIVES', '#333', 4, {rot: -90})
 .area(pairs('617,658 644,608 672,566 700,497 727,478 755,547 811,544 838,574 866,532 893,440 921,380 948,362 976,359'), 676, '#0a7480', .42)
 .labels([[623,643,'44.6'],[672,553,'47.3'],[727,462,'50.0'],[756,534,'47.9'],[810,531,'48.0'],[838,559,'47.1'],[893,426,'51.0'],[921,366,'52.9'],[971,353,'53.5']], '#2a8792').text(797, 718, 'Calculation = (Sum of Past 14 Days of Positives / Population) x 10,000').done();

b = board('d7', 1015, 287);
b.text(1232, 313, '7 DAYS of POSITIVES per 100,000 PEOPLE', '#333', 5).yaxis(1065, 1430, ['220','230','240','250','260','270','280','290','300'], 676, 345)
 .xaxis([1073,1132,1190,1249,1307,1366,1425], ['Sep 09','Sep 10','Sep 11','Sep 12','Sep 13','Sep 14','Sep 15'], 690, 345, 676).text(1027, 510, 'POSITIVES', '#333', 4, {rot: -90})
 .area(pairs('1073,600 1132,655 1190,592 1249,521 1307,476 1366,387 1425,370'), 676, '#d24726', .42)
 .labels([[1082,585,'238.5'],[1132,639,'225.2'],[1190,579,'240.3'],[1249,506,'257.5'],[1307,463,'268.8'],[1366,375,'289.7'],[1416,356,'293.9']], '#e0694e').text(1248, 718, 'Calculation = (Sum of Past 7 Days of Positives / Population) x 100,000').done();

// Ring slices, angles as fractions of a turn, clockwise from the top
const slice = (cx, cy, R, r, a, z, c) => { const p = (q, f) => [cx + q * Math.sin(f * 6.28318), cy - q * Math.cos(f * 6.28318)].map(n => n.toFixed(2)).join(' '); const L = z - a > .5 ? 1 : 0; return `<path d="M${p(R,a)}A${R} ${R} 0 ${L} 1 ${p(R,z)}L${p(r,z)}A${r} ${r} 0 ${L} 0 ${p(r,a)}z" fill="${c}"/>`; };

b = board('gender', 126, 487);
b.text(344, 511, 'GENDER', '#333', 5).raw(slice(73.7, 91.6, 42.2, 25.200, 0, .5333, '#d24726') + slice(73.7, 91.6, 42.2, 25.200, .5333, 1, '#0a7480'))
 .line([[418,1050],[426,1067],[434,1067]], '#aaa', .4).line([[260,752],[250,737],[242,737]], '#aaa', .4)
 .text(473, 1068, '1347 (53.33%)').text(204, 738, '1179 (46.67%)').text(297, 1278, '●', '#d24726', 4).text(325, 1280, 'Female').text(356, 1278, '●', '#0a7480', 4).text(378, 1280, 'Male').done();

b = board('spread', 575, 487);
b.text(793, 511, 'SPREADTYPE', '#333', 5).yaxis(630, 1000, ['0','200','400','600','800','1000'], 1172, 543).text(588, 857, 'ACTIVES', '#333', 4, {rot: -90});
[[956,'#d24726','Community'],[710,'#0a7480','Close Contact'],[474,'#a93439','Unknown'],[335,'#fbb44c','Household Contact'],[38,'#6d9949','Under Investigation'],[15,'#000','Travel']].forEach((d, i) => { const x = 655 + i * 55.2, y = 1172 - d[0] * .629; b.rect(x, y, x + 49, 1172, d[1]); b.text(x + 24, y - 16, d[0]); b.text(x + 22, 1187, d[2], '#333', 4, {a: 'end', rot: -45}); });
b.done();

b = board('race', 1023, 487);
let acc = 0;
b.text(1235, 511, 'RACE', '#333', 5);
[[.6392,'#0a7480'],[.2654,'#d24726'],[.0392,'#faa21b'],[.034,'#a93439'],[.0142,'#6d9949'],[.008,'#000']].forEach(d => { b.raw(slice(72, 92.2, 40.6, 24.300, acc, acc + d[0], d[1])); acc += d[0]; });
b.line([[1250,1080],[1253,1099],[1262,1099]], '#aaa', .4).line([[1132,799],[1125,790],[1112,790]], '#aaa', .4).line([[1178,731],[1172,717],[1165,717]], '#aaa', .4).line([[1212,713],[1208,697],[1200,697]], '#aaa', .4)
 .labels([[1300,1101,'1616 (63.92%)'],[1100,780,'671'],[1087,801,'(26.54%)'],[1136,717,'99 (3.92%)'],[1192,687,'86'],[1183,708,'(3.4%)']], '#333');
[[1037,'#0a7480','White'],[1083,'#d24726','Unknown'],[1147,'#faa21b','Black'],[1188,'#a93439','American Indian'],[1288,'#6d9949','2 or More'],[1355,'#000','Asian'],[1398,'#777','Other']].forEach(d => b.text(d[0], 1279, '●', d[1], 3).text(d[0] + 5, 1281, d[2], '#333', 4, {a: 'start'}));
b.done();

b = board('hosp', 126, 364);
b.text(340, 388, 'ACTIVE HOSPITALIZATIONS', '#333', 5).yaxis(158, 530, ['0','20','40','60'], 639, 445).xaxis([193,253,314,374,435,497], MON, 654)
 .area(pairs('163,636 168,625 175,610 182,605 186,588 192,574 198,582 204,588 210,605 215,596 222,599 228,592 232,598 237,580 242,565 250,552 254,552 260,540 268,550 274,534 280,545 288,525 294,538 299,514 306,525 313,545 318,545 324,575 329,568 335,580 343,560 350,558 358,582 366,573 372,575 378,583 386,555 392,545 395,523 402,550 408,548 412,515 418,522 426,500 432,484 438,502 445,478 449,440 454,430 458,440 463,508 468,480 474,485 480,450 485,420 491,445 495,432 499,450 504,430 509,418 514,440 518,485 524,440'), 639, '#faa21b', .42)
 .labels([[210,627,'10'],[299,498,'39'],[362,606,'16'],[454,448,'66'],[463,531,'40'],[486,441,'67'],[521,430,'62'],[519,504,'48']], '#fba92c').done();

b = board('hospage', 126, 694);
b.text(340, 718, 'AGE OF TOTAL HOSPITALIZED', '#333', 5).yaxis(176, 535, ['0','20','40','60','80','100','120'], 1119, 790).text(139, 933, 'HOSPITALIZATIONS', '#333', 4, {rot: -90}).text(364, 1157, 'AGE');
const AGES = ['0-9','10-19','20-29','30-39','40-49','50-59','60-69','70-79','80+'];
[5,2,27,64,82,117,136,113,128].forEach((v, i) => { const x = 193 + i * 38.6, y = 1119 - v * 2.738; b.rect(x, y, x + 30, 1119, '#6d9949', Math.min(1, .42 + v / 190)); b.text(x + 15, 1134, AGES[i]); if (v > 120) { b.rect(x + 2, y + 6, x + 28, y + 30, '#fff'); b.text(x + 15, y + 19, v, '#6d9949'); } else b.text(x + 15, y - 16, v, '#6d9949'); });
b.done();

[['g1',564,675,'OCCUPIED NON-ICU BEDS','1,336','42','1,648',.81,'#a93439',.025],['g2',798,909,'OCCUPIED ICU BEDS','141','20','353',.4,'#0a7480',.057]].forEach(g => {
  b = board(g[0], g[1], 616); const cx = (g[1] === 564 ? 41.6 : 41.2), cy = 50.2;
  b.text(g[2], 638, g[3]).raw(slice(cx, cy, 31.200, 22, -.25, .25, '#f0efee') + slice(cx, cy, 31.200, 22, -.25, -.25 + g[7] / 2, g[8]));
  const a = Math.PI * (1 - g[9] - .01); b.raw(`<path d="M${cx + 22*Math.cos(a)} ${cy - 22*Math.sin(a)}L${cx + 31.200*Math.cos(a)} ${cy - 31.200*Math.sin(a)}" stroke="#111" stroke-width=".5"/>`);
  b.text(g[1] + 123, 816, g[4], '#333', 9).text(g[1] + 19, g[1] === 564 ? 821 : 806, g[5], '#000', 5, {w: 700}).text(g[1] + 32, 855, '0').text(g[1] + 204, 855, g[6]).done();
});

b = board('deathage', 1030, 487);
b.text(1241, 511, 'CUMULATIVE DEATHS BY AGE GROUP', '#333', 5).yaxis(1072, 1445, ['0','20','40','60','80'], 784, 543).text(1041, 664, 'DEATHS', '#333', 4, {rot: -90}).text(1260, 826, 'AGE');
[0,0,1,1,7,10,21,36,101].forEach((v, i) => { const x = 1090 + i * 38.8, y = Math.max(543, 784 - v * 3.01); b.rect(x, y, x + 31, 784, '#d24726', v > 90 ? 1 : .4 + v / 150); b.text(x + 15, 800, AGES[i]); if (v > 90) { b.rect(x + 2, 551, x + 29, 574, '#fff'); b.text(x + 15, 563, v, '#d24726'); } else b.text(x + 15, y - 16, v, '#e0694e'); });
b.done();

b = board('month', 1030, 860);
b.text(1242, 884, 'DEATHS BY MONTH', '#333', 5).yaxis(1055, 1445, ['0','20','40','60'], 1086, 913);
[[3,'March',.4],[21,'April',.68],[43,'May',1],[18,'June',.62],[21,'July',.68],[41,'August',1],[30,'September',.82]].forEach((d, i) => { const x = 1077 + i * 51.4, y = 1086 - d[0] * 2.88; b.rect(x, y, x + 40, 1086, '#d24726', d[2]); b.text(x + 20, y - 15, d[0], '#e0694e'); b.text(x + 20, 1100, d[1], '#333', 4, {a: 'end', rot: -45}); });
b.done();

// County map: outline | fill | name | label x,y | value | value y
const P = '#ecb0a5', Q = '#ecaa9e';
b = board('map', 469, 233);
[
['493,235 614,240 612,310 618,312 617,331 490,325',P,'Divide',556,273,1,299],
['614,240 714,245 712,294 699,294 699,314 689,314 690,357 617,355 617,312 612,310',P,'Burke',660,279,2,314],
['714,245 771,247 774,361 819,362 819,381 733,380 733,317 714,315',P,'Renville',745,271,9,305],
['771,247 916,247 916,318 920,361 891,361 890,340 819,340 819,361 774,361',P,'Bottineau',847,279,4,314],
['916,247 987,247 988,317 992,318 992,361 920,361 920,318 916,318',P,'Rolette',952,291,10,326],
['987,247 1046,246 1046,317 1050,358 1049,403 992,404 992,318 988,317','#fff'],
['1046,246 1160,240 1164,354 1050,358 1050,317 1046,316',P,'Cavalier',1104,282,8,317],
['1160,240 1237,236 1253,319 1249,352 1164,355',P,'Pembina',1204,282,4,317],
['1122,356 1249,352 1253,437 1126,443',P,'Walsh',1188,380,13,416],
['617,355 718,360 718,402 722,404 721,488 727,490 727,533 670,533 670,550 650,552 640,543 640,520 651,494 640,473 620,460 622,400 617,399',P,'Mountrail',673,420,16,455],
['490,326 617,332 617,399 622,401 620,460 598,454 577,458 574,477 548,486 536,470 536,455 523,467 514,482 507,483 500,494 486,485','#d85b3d','Williams',552,381,195,416],
['699,293 712,293 714,315 733,317 733,380 823,381 828,535 727,534 726,490 721,488 722,404 718,402 718,360 690,357 689,314 699,314','#dc684d','Ward',775,441,171,476],
['819,340 890,340 891,361 905,361 909,490 914,492 914,535 828,535 823,381 819,381',P,'McHenry',867,438,8,473],
['905,361 992,361 992,404 953,406 957,535 914,535 914,492 909,490',P,'Pierce',929,420,2,458],
['1050,360 1122,357 1126,443 1112,444 1111,489 1101,490 1100,515 1085,500 1075,480 1070,515 1050,482 1040,492 1025,458 1024,404 1049,403',Q,'Ramsey',1077,414,22,449],
['953,406 1024,404 1025,460 1040,492 1050,482 1070,515 1075,490 1085,500 1100,517 1102,531 957,535',Q,'Benson',997,467,22,503],
['1112,445 1170,442 1174,572 1102,575 1101,490 1111,489',P,'Nelson',1142,500,3,536],
['1170,441 1252,437 1283,567 1174,572','#d7593b','Grand Forks',1218,492,208,527],
['486,485 500,494 507,483 514,482 523,467 536,455 536,470 548,486 574,477 577,458 598,454 620,460 640,473 651,494 640,520 640,573 588,571 586,658 481,652',Q,'McKenzie',536,552,27,590],
['588,571 640,573 640,543 650,552 670,550 670,545 682,548 684,590 690,603 686,630 694,665 694,745 592,745 594,658 586,658',P,'Dunn',642,642,14,677],
['670,533 872,537 871,579 861,580 862,665 852,666 852,709 830,709 826,678 795,682 775,650 782,625 775,607 740,620 708,610 690,601 683,588 682,548 670,553',Q,'McLean',812,576,24,611],
['872,537 929,537 933,664 862,665 861,580 871,579','#fff'],
['929,537 1016,535 1020,600 1021,664 933,665',P,'Wells',979,587,3,623],
['1016,535 1102,532 1104,598 1020,600',P,'Eddy',1061,556,12,581],
['1020,600 1104,598 1108,664 1021,665',P,'Foster',1063,619,12,645],
['1106,576 1163,573 1167,682 1110,684',P,'Griggs',1138,614,5,644],
['1163,573 1219,571 1222,680 1167,682',P,'Steele',1190,618,3,647],
['1219,571 1284,567 1293,674 1222,680',P,'Traill',1255,608,12,644],
['690,603 708,610 740,620 775,607 782,625 775,650 795,684 737,685 737,750 696,748 694,665 686,630','#eba799','Mercer',722,648,36,683],
['737,685 795,684 826,678 836,740 830,752 737,750',P,'Oliver',785,706,5,736],
['481,652 523,655 522,740 526,742 524,827 503,829 502,851 474,849',P,'',502,757,3,794],
['523,656 593,659 594,745 569,745 569,830 524,829','#fff'],
['474,849 502,851 503,829 569,831 602,834 602,920 472,913','#fff'],
['569,745 697,744 699,835 569,831','#d7593b','Stark',634,774,205,808],
['697,750 832,752 850,810 850,828 873,848 869,896 835,902 820,924 816,906 789,905 788,840 741,838 740,817 699,816','#d7593b','Morton',802,780,204,815],
['852,667 925,667 929,838 855,838 848,828 850,810 832,752 836,740 830,709 852,709','#672115','Burleigh',885,738,501,772],
['925,667 996,665 1001,837 929,838',P,'Kidder',962,738,4,772],
['996,665 1110,663 1116,835 1001,838','#e17e68','Stutsman',1054,735,123,769],
['1110,684 1196,681 1201,831 1116,835','#e99f90','Barnes',1157,741,48,776],
['1196,681 1293,675 1305,755 1302,827 1201,831','#7d2a19','Cass',1250,735,446,769],
['602,834 703,836 706,943 650,941 650,923 602,920',P,'Hettinger',655,870,17,896],
['699,816 740,817 741,838 788,840 789,905 816,906 820,924 800,960 798,975 775,985 752,992 730,987 709,978 703,836 699,835',P,'Grant',750,894,2,929],
['472,914 592,921 591,1003 469,997',P,'Bowman',535,944,5,980],
['592,921 650,923 650,941 707,943 707,1009 591,1004',P,'Adams',641,962,6,989],
['709,978 730,987 752,992 775,985 798,975 800,960 820,924 835,898 869,896 872,920 866,945 879,1012 707,1009',P,'Sioux',838,953,13,989],
['858,838 947,840 952,1012 879,1012 866,945 873,920 869,896 873,848',Q,'Emmons',912,911,28,947],
['947,840 1048,838 1049,923 948,926',P,'Logan',997,867,6,902],
['949,926 1052,925 1055,1011 952,1012',P,'McIntosh',1009,950,3,986],
['1048,838 1163,834 1165,921 1050,924',P,'LaMoure',1110,858,11,893],
['1052,925 1168,922 1170,1007 1055,1011',P,'Dickey',1111,950,4,986],
['1163,834 1247,830 1251,918 1165,921',P,'Ransom',1208,860,13,896],
['1168,921 1251,918 1257,1001 1170,1006',P,'Sargent',1211,944,12,980],
['1247,830 1305,826 1328,910 1335,997 1257,1001',Q,'Richland',1290,906,23,941]
].forEach(c => { b.poly(pairs(c[0]), c[1], 1, '#a98078'); if (c.length > 2) { b.text(c[3], c[4], c[2], '#fff', 4, {w: 600}); b.text(c[3], c[6], c[5], '#fff', 5, {w: 300}); } });
b.text(502, 757, 'lden Valle', '#fff', 4, {w: 600}).done();
</script>
</body>
</html>
